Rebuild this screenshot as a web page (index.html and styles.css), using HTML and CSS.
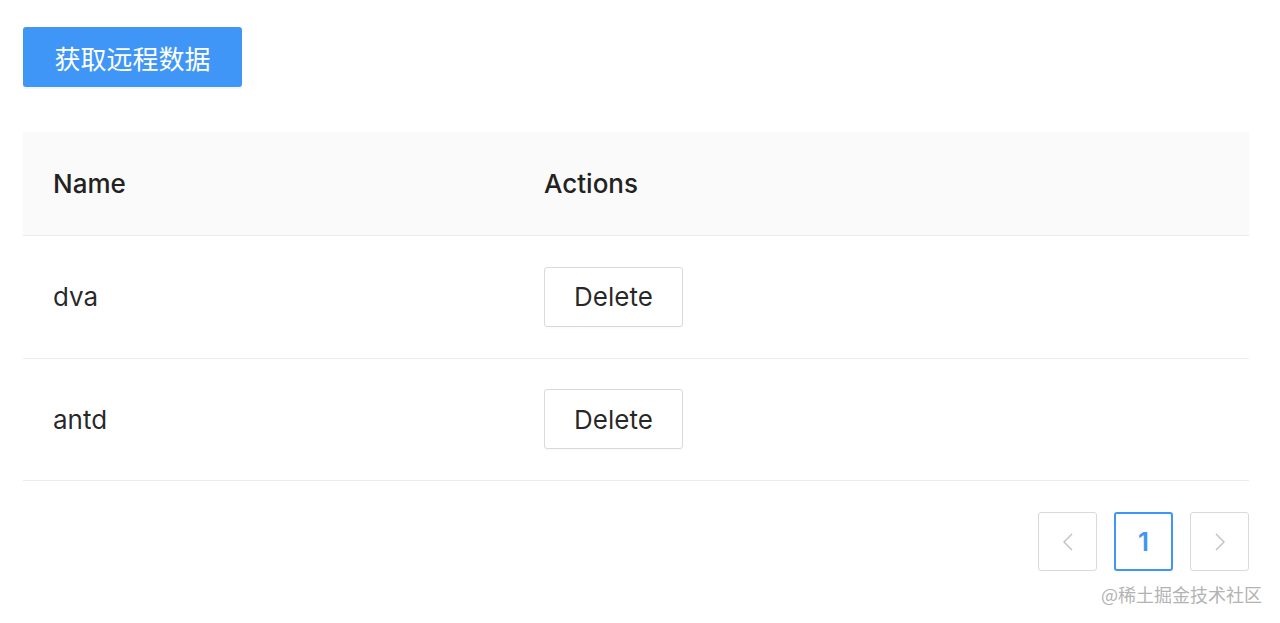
FILE: index.html
```html
<!DOCTYPE html>
<html lang="zh">
<head>
<meta charset="utf-8">
<title>Products</title>
<link rel="stylesheet" href="styles.css">
</head>
<body>
<div class="page">
  <button class="btn-primary">获取远程数据</button>
  <div class="table">
    <div class="row head">
      <div class="cell c1">Name</div>
      <div class="cell c2">Actions</div>
    </div>
    <div class="row">
      <div class="cell c1">dva</div>
      <div class="cell c2"><button class="btn">Delete</button></div>
    </div>
    <div class="row">
      <div class="cell c1">antd</div>
      <div class="cell c2"><button class="btn">Delete</button></div>
    </div>
  </div>
  <div class="pager">
    <span class="pg"><svg width="14" height="22" viewBox="0 0 14 22"><path d="M11 3 L3 11 L11 19" fill="none" stroke="#bfbfbf" stroke-width="1.4"/></svg></span>
    <span class="pg active">1</span>
    <span class="pg"><svg width="14" height="22" viewBox="0 0 14 22"><path d="M3 3 L11 11 L3 19" fill="none" stroke="#bfbfbf" stroke-width="1.4"/></svg></span>
  </div>
</div>
<div class="mark">@稀土掘金技术社区</div>
</body>
</html>
```
FILE: styles.css
```css
html, body { margin: 0; padding: 0; background: #fff; }
body {
  font-family: Inter, "Liberation Sans", "Noto Sans CJK SC", sans-serif;
  color: rgba(0,0,0,0.85);
  width: 1280px;
  height: 623px;
  overflow: hidden;
  position: relative;
}
.page {
  padding: 27px 31px 0 23px;
  display: flex;
  flex-direction: column;
  align-items: flex-start;
}
.btn-primary {
  width: 219px;
  height: 60px;
  border: none;
  border-radius: 3px;
  background: #4096f7;
  color: #fff;
  font-family: "Noto Sans CJK SC", sans-serif;
  font-size: 26px;
  padding: 0;
  box-shadow: 0 2px 0 rgba(0,0,0,0.04);
}
.table {
  margin-top: 45px;
  width: 1226px;
  display: flex;
  flex-direction: column;
}
.row {
  box-sizing: border-box;
  display: grid;
  grid-template-columns: 491px 1fr;
  height: 122.5px;
  border-bottom: 1px solid #ececec;
  align-items: center;
}
.row.head {
  height: 104px;
  background: #fafafa;
  font-weight: 500;
  border-bottom: 1px solid #ebebeb;
}
.cell {
  padding-left: 30px;
  font-size: 26px;
}
.head .cell { color: #222; }
.btn {
  width: 139px;
  height: 60px;
  border: 1px solid #d9d9d9;
  border-radius: 3px;
  background: #fff;
  font-family: Inter, "Liberation Sans", sans-serif;
  font-size: 26px;
  color: rgba(0,0,0,0.85);
  padding: 0;
  box-shadow: 0 2px 0 rgba(0,0,0,0.015);
}
.pager {
  margin-top: 31px;
  align-self: flex-end;
  display: flex;
  gap: 17px;
}
.pg {
  box-sizing: border-box;
  width: 59px;
  height: 59px;
  border: 1px solid #d9d9d9;
  border-radius: 3px;
  display: flex;
  align-items: center;
  justify-content: center;
  font-size: 26px;
  background: #fff;
}
.pg.active {
  border: 2px solid #4096f7;
  color: #4096f7;
  font-weight: 600;
}
.mark {
  position: absolute;
  left: 1101px;
  top: 581px;
  font-family: "Noto Sans CJK SC", sans-serif;
  font-size: 18px;
  color: #b3b3b3;
}
```
